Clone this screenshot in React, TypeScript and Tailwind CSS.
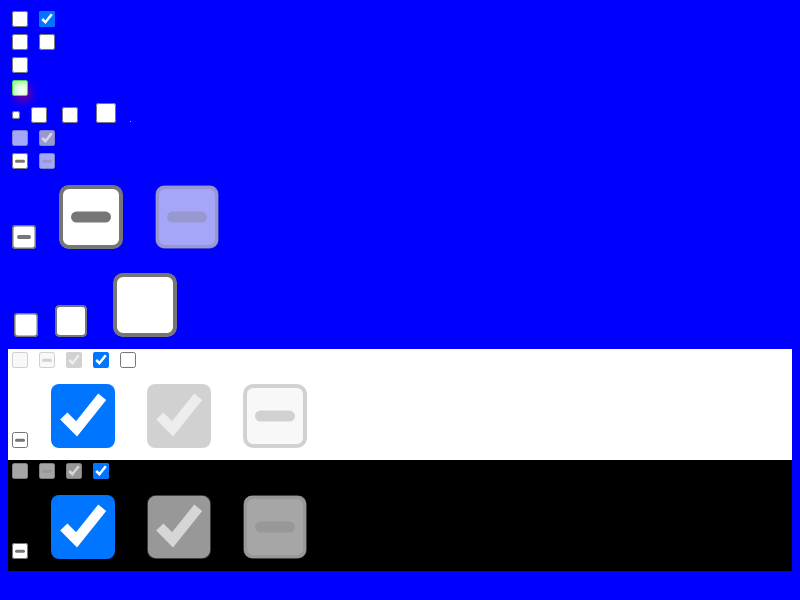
import type { ReactNode } from 'react'

interface BoxProps {
  checked?: boolean
  indeterminate?: boolean
  disabled?: boolean
  size?: string
  ml: string
}

// native checkbox; the "mixed" state is drawn as a bar over an unchecked box
function Box({ checked, indeterminate, disabled, size = 'w-4 h-4', ml }: BoxProps) {
  return (
    <div className={`relative shrink-0 ${ml}`}>
      <input
        type="checkbox"
        defaultChecked={checked}
        disabled={disabled}
        readOnly
        className={`block m-0 ${size}`}
      />
      {indeterminate && (
        <span
          className={`absolute left-[19%] right-[19%] top-1/2 h-[17%] -translate-y-1/2 rounded-full ${
            disabled ? 'bg-[rgba(118,118,118,0.3)]' : 'bg-[#767676]'
          }`}
        />
      )}
    </div>
  )
}

function Row({ className, children }: { className: string; children: ReactNode }) {
  return <div className={`flex ${className}`}>{children}</div>
}

// same set of boxes, painted over a given background
function Panel({ bg, withUnchecked }: { bg: string; withUnchecked?: boolean }) {
  return (
    <div className={bg}>
      <Row className="h-[23px] items-start pt-[3px]">
        <Box disabled ml="ml-[4px]" />
        <Box disabled indeterminate ml="ml-[11px]" />
        <Box disabled checked ml="ml-[11px]" />
        <Box checked ml="ml-[11px]" />
        {withUnchecked && <Box ml="ml-[11px]" />}
      </Row>
      <Row className="h-[88px] items-end pb-[12px]">
        <Box indeterminate ml="ml-[4px]" />
        <Box checked size="w-4 h-4 [zoom:4]" ml="ml-[23px]" />
        <Box checked disabled size="w-4 h-4 [zoom:4]" ml="ml-[32px]" />
        <Box indeterminate disabled size="w-4 h-4 [zoom:4]" ml="ml-[32px]" />
      </Row>
    </div>
  )
}

export default function App() {
  return (
    <div className="min-h-screen bg-[#0000ff] p-2 font-['Liberation_Serif',serif]">
      <Row className="h-[23px] items-start pt-[3px]">
        <Box ml="ml-[4px]" />
        <Box checked ml="ml-[11px]" />
      </Row>
      <Row className="h-[23px] items-start pt-[3px]">
        <Box ml="ml-[4px]" />
        <Box ml="ml-[11px]" />
      </Row>
      <Row className="h-[23px] items-start pt-[3px]">
        <Box ml="ml-[4px]" />
      </Row>
      <Row className="h-[23px] items-start pt-[3px]">
        <span className="ml-[4px] block w-4 h-4 rounded-[2px] border border-[#4fd34f] bg-[radial-gradient(circle_at_65%_70%,#ffffff_0%,#d8ffd8_45%,#86f086_100%)] shadow-[3px_5px_9px_rgba(200,0,60,0.55)]" />
      </Row>
      <Row className="h-[27px] items-end pb-[4px]">
        <div className="mb-[4px]">
          <Box size="w-2 h-2" ml="ml-[4px]" />
        </div>
        <Box ml="ml-[11px]" />
        <Box ml="ml-[15px]" />
        <Box size="w-5 h-5" ml="ml-[18px]" />
        <span className="ml-[14px] mb-[1px] block w-px h-px bg-[#c8b040]" />
      </Row>
      <Row className="h-[23px] items-start pt-[3px]">
        <Box disabled ml="ml-[4px]" />
        <Box disabled checked ml="ml-[11px]" />
      </Row>
      <Row className="h-[23px] items-start pt-[3px]">
        <Box indeterminate ml="ml-[4px]" />
        <Box indeterminate disabled ml="ml-[11px]" />
      </Row>
      <Row className="h-[88px] items-end pb-[12px]">
        <Box indeterminate size="w-4 h-4 [zoom:1.5]" ml="ml-[4px]" />
        <Box indeterminate size="w-4 h-4 [zoom:4]" ml="ml-[23px]" />
        <Box indeterminate disabled size="w-4 h-4 [zoom:4]" ml="ml-[32px]" />
      </Row>
      <Row className="h-[88px] items-end pb-[12px]">
        <Box size="w-4 h-4 [zoom:1.5]" ml="ml-[6px]" />
        <Box size="w-4 h-4 [zoom:2]" ml="ml-[17px]" />
        <Box size="w-4 h-4 [zoom:4]" ml="ml-[26px]" />
      </Row>
      <Panel bg="bg-white" withUnchecked />
      <Panel bg="bg-black" />
    </div>
  )
}
